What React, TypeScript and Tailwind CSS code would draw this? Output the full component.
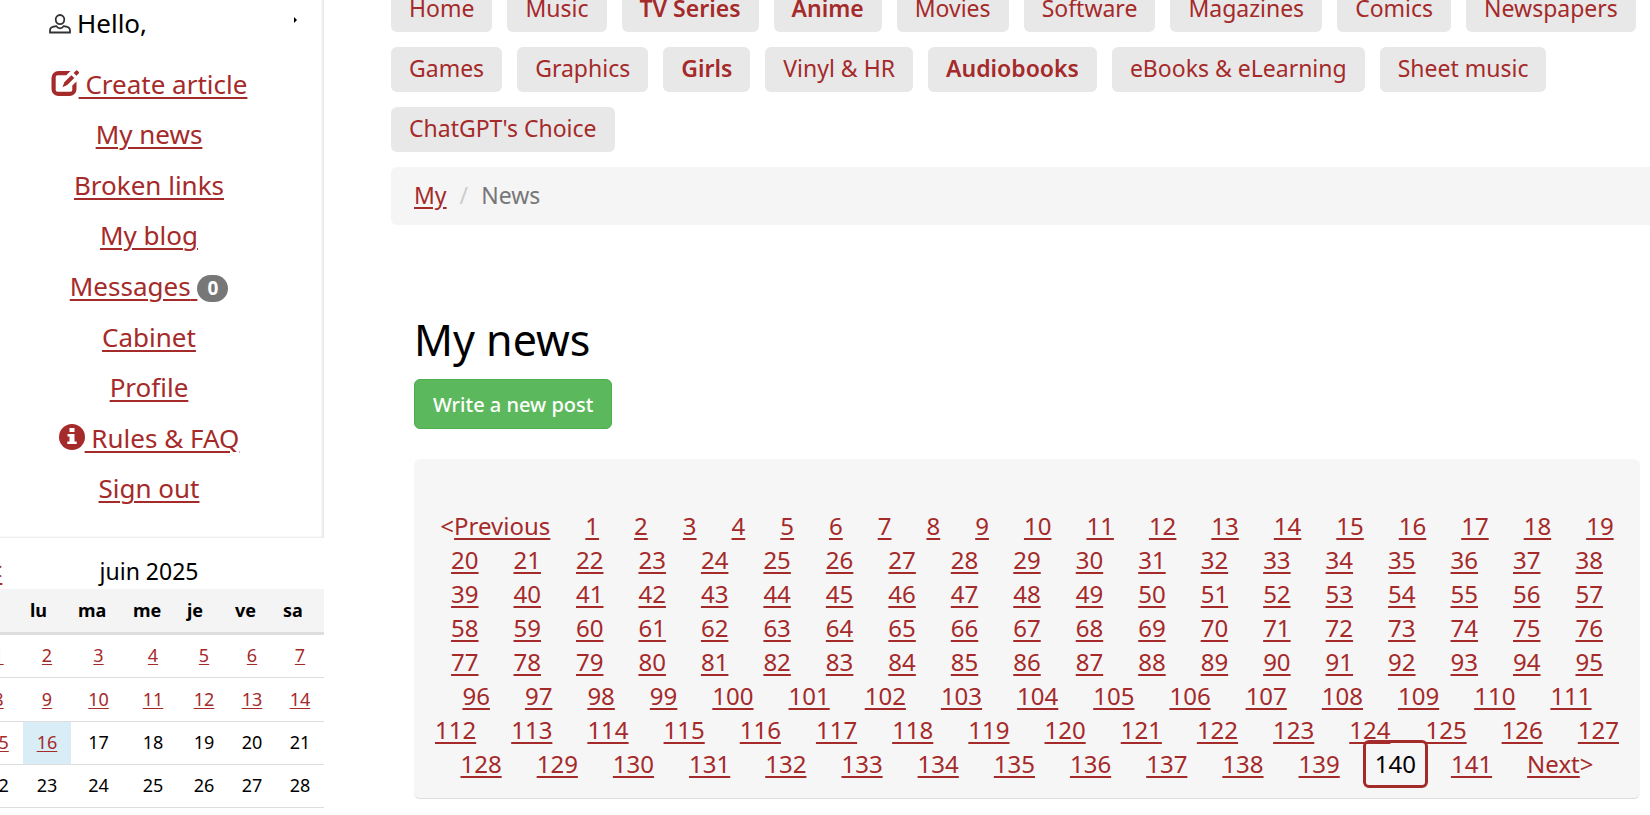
import React from "react";

const categories: { label: string; strong?: boolean }[] = [
  { label: "Home" },
  { label: "Music" },
  { label: "TV Series", strong: true },
  { label: "Anime", strong: true },
  { label: "Movies" },
  { label: "Software" },
  { label: "Magazines" },
  { label: "Comics" },
  { label: "Newspapers" },
  { label: "Games" },
  { label: "Graphics" },
  { label: "Girls", strong: true },
  { label: "Vinyl & HR" },
  { label: "Audiobooks", strong: true },
  { label: "eBooks & eLearning" },
  { label: "Sheet music" },
  { label: "ChatGPT's Choice" },
];

const weeks = [
  [1, 2, 3, 4, 5, 6, 7],
  [8, 9, 10, 11, 12, 13, 14],
  [15, 16, 17, 18, 19, 20, 21],
  [22, 23, 24, 25, 26, 27, 28],
];

const today = 16;
const currentPage = 140;
const pages = Array.from({ length: 141 }, (_, i) => i + 1);

function UserIcon() {
  return (
    <svg viewBox="0 0 22 20" className="h-5 w-[22px]" fill="none" stroke="#333" strokeWidth="1.8" aria-hidden="true">
      <ellipse cx="11" cy="5.6" rx="4.3" ry="4.6" />
      <path d="M7.400 12.200C3.500 12.600 1 13.900 1 16.200v2.300h20v-2.300c0-2.300-2.500-3.600-6.400-4C13.600 13.600 12.300 14.300 11 14.300s-2.600-.7-3.600-2.100Z" />
    </svg>
  );
}

function EditIcon() {
  return (
    <svg viewBox="0 0 28 26" className="inline-block h-[26px] w-7 align-[-2px]" aria-hidden="true">
      <path
        d="M19.500 1H7.500A7 7 0 0 0 .500 8V19a7 7 0 0 0 7 7H18.500a7 7 0 0 0 7-7V11.500L21.300 15.500V20a1.800 1.800 0 0 1-1.800 1.800H6.500A1.800 1.800 0 0 1 4.700 20V7A1.800 1.800 0 0 1 6.500 5.200H15.300Z"
        fill="#a52a2a"
      />
      <path
        d="M11.500 17.200 13.300 12.200 20.400 5.200 23.300 8.100 16.200 15.100ZM22.600 3 24.800.8a1.300 1.300 0 0 1 1.800 0l1 1a1.300 1.300 0 0 1 0 1.800L25.400 5.800Z"
        fill="#a52a2a"
      />
    </svg>
  );
}

function InfoIcon() {
  return (
    <svg viewBox="0 0 26 26" className="inline-block h-[26px] w-[26px] align-[-2px]" aria-hidden="true">
      <circle cx="13" cy="13" r="13" fill="#a52a2a" />
      <path d="M10.500 4h5v4h-5zM8.500 10h7v7.500h2.200V20H8.300v-2.500h2.200v-5h-2z" fill="#fff" />
    </svg>
  );
}

function SideLink({ children }: { children: React.ReactNode }) {
  return (
    <li className="flex items-center justify-center">
      <a href="#" className="underline decoration-2 underline-offset-3">
        {children}
      </a>
    </li>
  );
}

function Sidebar() {
  return (
    <aside className="-ml-[26px] w-[350px] shrink-0">
      <section className="h-[538px] shadow-[inset_-2px_-1px_2px_#e8e8e8]">
        <div className="flex h-[59px] items-center gap-[6px] pr-[27px] pb-[12px] pl-[75px] text-[26px] text-black">
          <UserIcon />
          <span>Hello,</span>
          <svg viewBox="0 0 3 6" className="mb-2 ml-auto h-[6px] w-[3px]" aria-hidden="true">
            <path d="M0 0 3 3 0 6Z" fill="#000" />
          </svg>
        </div>
        <ul className="grid h-[455px] auto-rows-fr text-[26px] text-[#a52a2a]">
          <SideLink>
            <EditIcon /> Create article
          </SideLink>
          <SideLink>My news</SideLink>
          <SideLink>Broken links</SideLink>
          <SideLink>My blog</SideLink>
          <SideLink>
            Messages{" "}
            <span className="inline-block h-[27px] rounded-full bg-[#777] px-[10px] align-[1px] text-[19px] leading-[27px] font-bold text-white">
              0
            </span>
          </SideLink>
          <SideLink>Cabinet</SideLink>
          <SideLink>Profile</SideLink>
          <SideLink>
            <InfoIcon /> Rules &amp; FAQ
          </SideLink>
          <SideLink>Sign out</SideLink>
        </ul>
      </section>
      <div className="relative flex h-[51px] items-end justify-center pb-px text-[23px] text-black">
        <a
          href="#"
          className="absolute bottom-px left-0.5 text-[#a52a2a] underline decoration-2 underline-offset-3"
          aria-label="Previous month"
        >
          &lt;&lt;
        </a>
        <h2>juin 2025</h2>
      </div>
      <table className="w-full table-fixed border-collapse text-[18px] text-black">
        <colgroup>
          <col className="w-[49px]" />
          <col className="w-12" />
          <col className="w-[55px]" />
          <col className="w-[54px]" />
          <col className="w-12" />
          <col className="w-12" />
          <col className="w-12" />
        </colgroup>
        <thead>
          <tr className="h-11 border-b-3 border-[#ddd] bg-[#f4f4f4]">
            {["di", "lu", "ma", "me", "je", "ve", "sa"].map((d) => (
              <th key={d} className="px-[7px] text-left font-bold">
                {d}
              </th>
            ))}
          </tr>
        </thead>
        <tbody>
          {weeks.map((week) => (
            <tr key={week[0]} className="h-[43px] border-b border-[#ddd] nth-[-n+2]:h-11">
              {week.map((day) => (
                <td key={day} className={day === today ? "bg-[#d9edf7] text-center" : "text-center"}>
                  {day <= today ? (
                    <a href="#" className="text-[#a52a2a] underline underline-offset-2">
                      {day}
                    </a>
                  ) : (
                    day
                  )}
                </td>
              ))}
            </tr>
          ))}
        </tbody>
      </table>
    </aside>
  );
}

export default function App() {
  return (
    <div className="flex h-screen items-start overflow-hidden bg-white font-['Noto_Sans','Open_Sans',sans-serif] text-[#a52a2a]">
      <Sidebar />
      <main className="ml-[67px] min-w-0 flex-1">
        <nav className="-mt-[13px] flex flex-wrap gap-[15px] text-[23px]" aria-label="Categories">
          {categories.map((c) => (
            <a
              key={c.label}
              href="#"
              className={
                c.strong
                  ? "h-[45px] rounded-md bg-[#e8e8e8] px-[18px] leading-[42px] font-semibold"
                  : "h-[45px] rounded-md bg-[#e8e8e8] px-[18px] leading-[42px]"
              }
            >
              {c.label}
            </a>
          ))}
        </nav>
        <nav
          className="mt-[15px] flex h-[58px] items-center rounded-l-md bg-[#f5f5f5] px-[23px] pb-[2px] text-[23px]"
          aria-label="Breadcrumb"
        >
          <a href="#" className="underline decoration-2 underline-offset-3">
            My
          </a>
          <span className="px-[13px] text-[#ccc]">/</span>
          <span className="text-[#777]">News</span>
        </nav>
        <div className="mr-[10px] ml-[23px]">
          <h1 className="mt-[87px] text-[43px] leading-[56px] text-black">My news</h1>
          <button
            type="button"
            className="mt-[11px] block h-[50px] rounded-md border border-[#4cae4c] bg-[#5cb85c] px-[18px] pt-[2px] text-[20px] font-medium text-white"
          >
            Write a new post
          </button>
          <div className="mt-[30px] flex flex-wrap justify-center gap-x-[35px] rounded-md border-b border-[#ddd] bg-[#f6f6f6] px-[15px] pt-[50px] pb-[17px] text-[24px] leading-[34px]">
            <span>
              &lt;
              <a href="#" className="underline decoration-2 underline-offset-3">
                Previous
              </a>
            </span>
            {pages.map((p) =>
              p === currentPage ? (
                <span key={p} className="-mx-3 -my-[7px] rounded-md border-3 border-[#a52a2a] px-[9px] py-1 text-black">
                  {p}
                </span>
              ) : (
                <a key={p} href="#" className="underline decoration-2 underline-offset-3">
                  {p}
                </a>
              ),
            )}
            <span>
              <a href="#" className="underline decoration-2 underline-offset-3">
                Next
              </a>
              &gt;
            </span>
          </div>
        </div>
      </main>
    </div>
  );
}
